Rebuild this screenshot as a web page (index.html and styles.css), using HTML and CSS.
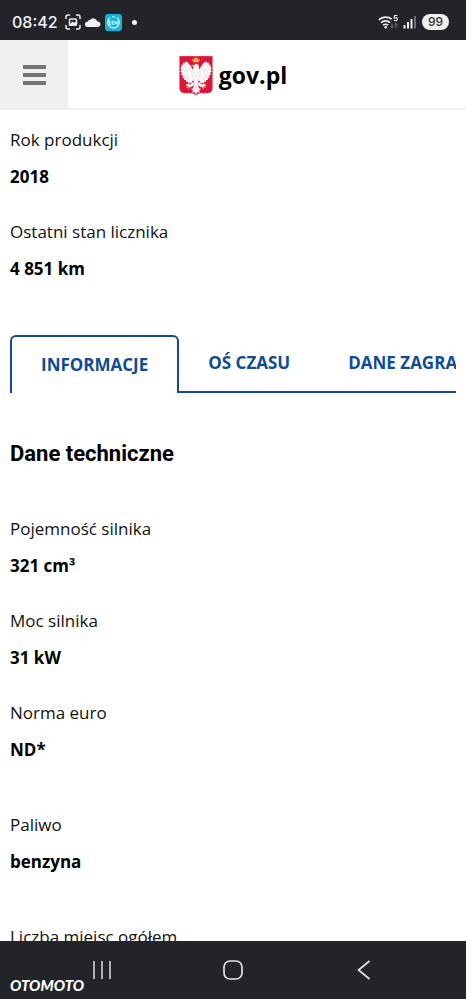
FILE: index.html
```html
<!DOCTYPE html>
<html lang="pl">
<head>
  <meta charset="UTF-8" />
  <meta name="viewport" content="width=device-width, initial-scale=1.0"/>
  <title>Historia pojazdu - gov.pl</title>
  <link rel="stylesheet" href="styles.css">
</head>
<body>

  <div class="status-bar">
    <span class="clock">08:42</span>
    <svg class="status-icon" width="16" height="16" viewBox="0 0 16 16" fill="none" stroke="#eee" stroke-width="1.5" stroke-linecap="round">
      <path d="M1 4.500V3a2 2 0 0 1 2-2h1.500M11.500 1H13a2 2 0 0 1 2 2v1.500M15 11.500V13a2 2 0 0 1-2 2h-1.500M4.500 15H3a2 2 0 0 1-2-2v-1.500"/>
      <rect x="4.500" y="5" width="7" height="6" rx="1"/>
      <path d="M5 11l2.500-2.500 1.500 1.300 2-1.500V11z" fill="#eee"/>
    </svg>
    <svg class="status-icon" width="16" height="16" viewBox="0 0 16 16">
      <path d="M2.600 13a2.600 2.600 0 0 1-.2-5.200A2.600 2.600 0 0 1 5 5.900 4.200 4.200 0 0 1 12.300 7.500a2.800 2.800 0 0 1 1 5.500z" fill="#f2f2f2"/>
    </svg>
    <svg class="status-icon" width="17" height="17" viewBox="0 0 17 17">
      <rect width="17" height="17" rx="3" fill="#12b5dc"/>
      <path d="M5 3.800A5.700 5.700 0 1 0 12 3.800" fill="none" stroke="#e6fbff" stroke-width="1.300"/>
      <path d="M7 3a5.800 5.800 0 0 1 3 0" fill="none" stroke="#e6fbff" stroke-width="1"/>
      <path d="M4.500 7v3.500M4.500 7h1.500v3.500h-1.500M7.500 7v3.500h1.500V7zM10.500 10.500V7l1.800 3.500V7" fill="none" stroke="#b8effa" stroke-width=".9"/>
    </svg>
    <span class="dot"></span>

    <svg class="status-right" width="40" height="18" viewBox="0 0 40 18" fill="none">
      <g stroke="#eee" stroke-width="1.700">
        <path d="M.8 6.800a10 10 0 0 1 13-.6"/>
        <path d="M3 9.700a6.700 6.700 0 0 1 9.300 0"/>
        <path d="M5.200 12.300a3.500 3.500 0 0 1 5 0"/>
      </g>
      <circle cx="7.700" cy="14.300" r="1.300" fill="#eee"/>
      <path d="M19.500 2.500h-3l-.2 2.500c2-.7 3.200 0 3.100 1.300-.1 1.500-2 1.800-3.300 1" stroke="#eee" stroke-width="1.200"/>
      <path d="M14 10.500V15m-1.600-1.600L14 15l1.600-1.600M18 15v-4.500m-1.600 1.600L18 10.500l1.600 1.600" stroke="#777980" stroke-width="1"/>
      <path d="M26.500 12v3.500M30 9v6.500M33.500 6v9.500" stroke="#eee" stroke-width="2"/>
      <path d="M37 3v12.500" stroke="#6c6e75" stroke-width="2"/>
    </svg>
    <span class="battery">99</span>
  </div>

  <header>
    <button class="menu-button" aria-label="Menu"><span></span><span></span><span></span></button>
    <a class="brand" href="#">
      <svg width="34" height="41" viewBox="2 3 98 118">
        <path d="M3 6h96v92q0 14-14 15H64q-8 1-13 7-5-6-13-7H17Q3 112 3 98z" fill="#dc1439" stroke="#efc4cc" stroke-width="1"/>
        <g fill="#fafafa" stroke="#c9a3aa" stroke-width=".8">
          <g id="wing">
            <path d="M45 48C38 41 36 33 27 24l-6-2-2 4-5-1 0 6-5 0 1 6-4 3 3 5-3 5 4 4-2 5 5 3-1 6 5 1 0 6 5 0 1 6 5-1 2 6 4-4 3 5 3-9 7-3z"/>
            <path d="M43 79l-7 9-10-2-5 4 7 1-5 7 7-4 0 8 4-8 4 2 8-9z"/>
          </g>
          <use href="#wing" transform="matrix(-1 0 0 1 102 0)"/>
          <path d="M45 31l-7 2 6 4c1 5-4 9-4 17 0 10 3 19 6 28l-3 17-6 2 5 4-2 7 6-3 5 8 5-8 6 3-2-7 5-4-6-2-3-17c3-9 6-18 6-28 0-8-4-12-3-18 1-7-8-11-14-3z"/>
        </g>
        <g fill="none" stroke="#c8b9bf" stroke-width="1.200">
          <path d="M15 30l14 24M11 40l16 22M10 51l17 17M13 61l15 12M21 24l16 27M24 79l12-17M87 30L73 54M91 40L75 62M92 51L75 68M89 61L74 73M81 24L65 51M78 79L66 62"/>
          <path d="M44 51l4 3 3-3 3 3 4-3M44 61l4 3 3-3 3 3 4-3M46 72l5 4 5-4M48 86l3 19 3-19"/>
        </g>
        <path d="M43 24l-4-11 6 4 0-7 4 3 2-7 2 7 4-3 0 7 6-4-4 11z" fill="#f0ae45"/>
        <path d="M44 31l-8 2 7 3zM21 90l6-3 2 3-5 4zM81 90l-6-3-2 3 5 4z" fill="#e8b160"/>
      </svg>
      <span>gov.pl</span>
    </a>
  </header>

  <main>
    <dl>
      <div class="item">
        <dt>Rok produkcji</dt>
        <dd>2018</dd>
      </div>
      <div class="item">
        <dt>Ostatni stan licznika</dt>
        <dd>4 851 km</dd>
      </div>
    </dl>

    <div class="tabs" role="tablist">
      <button class="tab active" role="tab" aria-selected="true">INFORMACJE</button>
      <button class="tab" role="tab" aria-selected="false">OŚ CZASU</button>
      <button class="tab" role="tab" aria-selected="false">DANE ZAGRA</button>
    </div>

    <h2>Dane techniczne</h2>

    <dl>
      <div class="item">
        <dt>Pojemność silnika</dt>
        <dd>321 cm³</dd>
      </div>
      <div class="item">
        <dt>Moc silnika</dt>
        <dd>31 kW</dd>
      </div>
      <div class="item wide">
        <dt>Norma euro</dt>
        <dd>ND*</dd>
      </div>
      <div class="item wide">
        <dt>Paliwo</dt>
        <dd>benzyna</dd>
      </div>
      <div class="item">
        <dt>Liczba miejsc ogółem</dt>
      </div>
    </dl>
  </main>

  <nav class="system-nav">
    <button aria-label="Ostatnie">
      <svg width="20" height="20" viewBox="0 0 20 20" fill="none" stroke="#c9cacd" stroke-width="1.700"><path d="M2 1v18M10 1v18M18 1v18"/></svg>
    </button>
    <button aria-label="Ekran główny">
      <svg width="20" height="20" viewBox="0 0 20 20" fill="none" stroke="#e4e4e6" stroke-width="1.700"><rect x="1" y="1" width="18" height="18" rx="6"/></svg>
    </button>
    <button aria-label="Wstecz">
      <svg width="20" height="20" viewBox="0 0 20 20" fill="none" stroke="#e4e4e6" stroke-width="1.700"><path d="M15.500 1L4.500 10l11 9"/></svg>
    </button>
    <span class="watermark">OTOMOTO</span>
  </nav>

</body>
</html>
```

FILE: styles.css
```css
* {
  box-sizing: border-box;
}

body {
  margin: 0;
  height: 100vh;
  display: flex;
  flex-direction: column;
  overflow: hidden;
  background-color: #fff;
  color: #111;
  font-family: 'Open Sans', 'Noto Sans', sans-serif;
  font-size: 17px;
  line-height: 24px;
}

button {
  border: none;
  padding: 0;
  background: none;
  font: inherit;
  cursor: pointer;
}

.status-bar {
  flex: none;
  height: 40px;
  padding: 4px 17px 0 12px;
  display: flex;
  align-items: center;
  background-color: #23242a;
  color: #f4f4f4;
  font-family: Inter, Roboto, sans-serif;
}

.clock {
  font-size: 16px;
  font-weight: 500;
  margin-right: 7px;
}

.status-icon {
  margin-right: 4px;
}

.dot {
  width: 5px;
  height: 5px;
  margin-left: 6px;
  border-radius: 50%;
  background-color: #f4f4f4;
}

.status-right {
  margin-left: auto;
  margin-right: 4px;
}

.battery {
  width: 27px;
  height: 16px;
  border-radius: 8px;
  background-color: #f0f0f0;
  color: #333;
  font-size: 12px;
  font-weight: 500;
  line-height: 16px;
  text-align: center;
}

header {
  flex: none;
  height: 70px;
  display: flex;
  position: relative;
  justify-content: center;
  border-bottom: 2px solid #f0f0f0;
}

.menu-button {
  position: absolute;
  left: 0;
  top: 0;
  width: 68px;
  height: 70px;
  display: flex;
  flex-direction: column;
  align-items: center;
  justify-content: center;
  gap: 4px;
  background-color: #f0f0f0;
}

.menu-button span {
  width: 23px;
  height: 4px;
  background-color: #747474;
}

.brand {
  display: flex;
  align-items: center;
  gap: 6px;
  padding-top: 2px;
  color: #000;
  font-size: 23px;
  font-weight: bold;
  text-decoration: none;
}

main {
  flex: 1;
  min-height: 0;
  overflow: hidden;
  padding: 18px 10px 0;
}

dl,
dd {
  margin: 0;
}

.item {
  margin-bottom: 31px;
}

.item.wide {
  margin-bottom: 51px;
}

dd {
  margin-top: 13px;
  color: #000;
  font-weight: bold;
}

.tabs {
  display: flex;
  height: 58px;
  margin-top: 54px;
  overflow: hidden;
}

.tab {
  flex: none;
  padding: 0 29px;
  border-bottom: 2px solid #124b8f;
  color: #0f4c94;
  font-weight: bold;
}

.tab:last-child {
  flex: 1 0 auto;
  padding-right: 0;
}

.tab.active {
  border: 2px solid #124b8f;
  border-bottom: none;
  border-radius: 6px 6px 0 0;
}

h2 {
  margin: 48px 0 50px;
  color: #000;
  font-family: Roboto, sans-serif;
  font-size: 22px;
  font-weight: bold;
  line-height: 26px;
}

.system-nav {
  flex: none;
  position: relative;
  height: 58px;
  padding: 0 37px;
  display: flex;
  justify-content: space-around;
  align-items: center;
  background-color: #23242a;
}

.system-nav svg {
  display: block;
}

/* sits over the navigation bar */
.watermark {
  position: absolute;
  left: 10px;
  bottom: 5px;
  color: #fff;
  font-family: Lato, sans-serif;
  font-size: 15px;
  font-style: italic;
  font-weight: 900;
  line-height: 18px;
}
```
